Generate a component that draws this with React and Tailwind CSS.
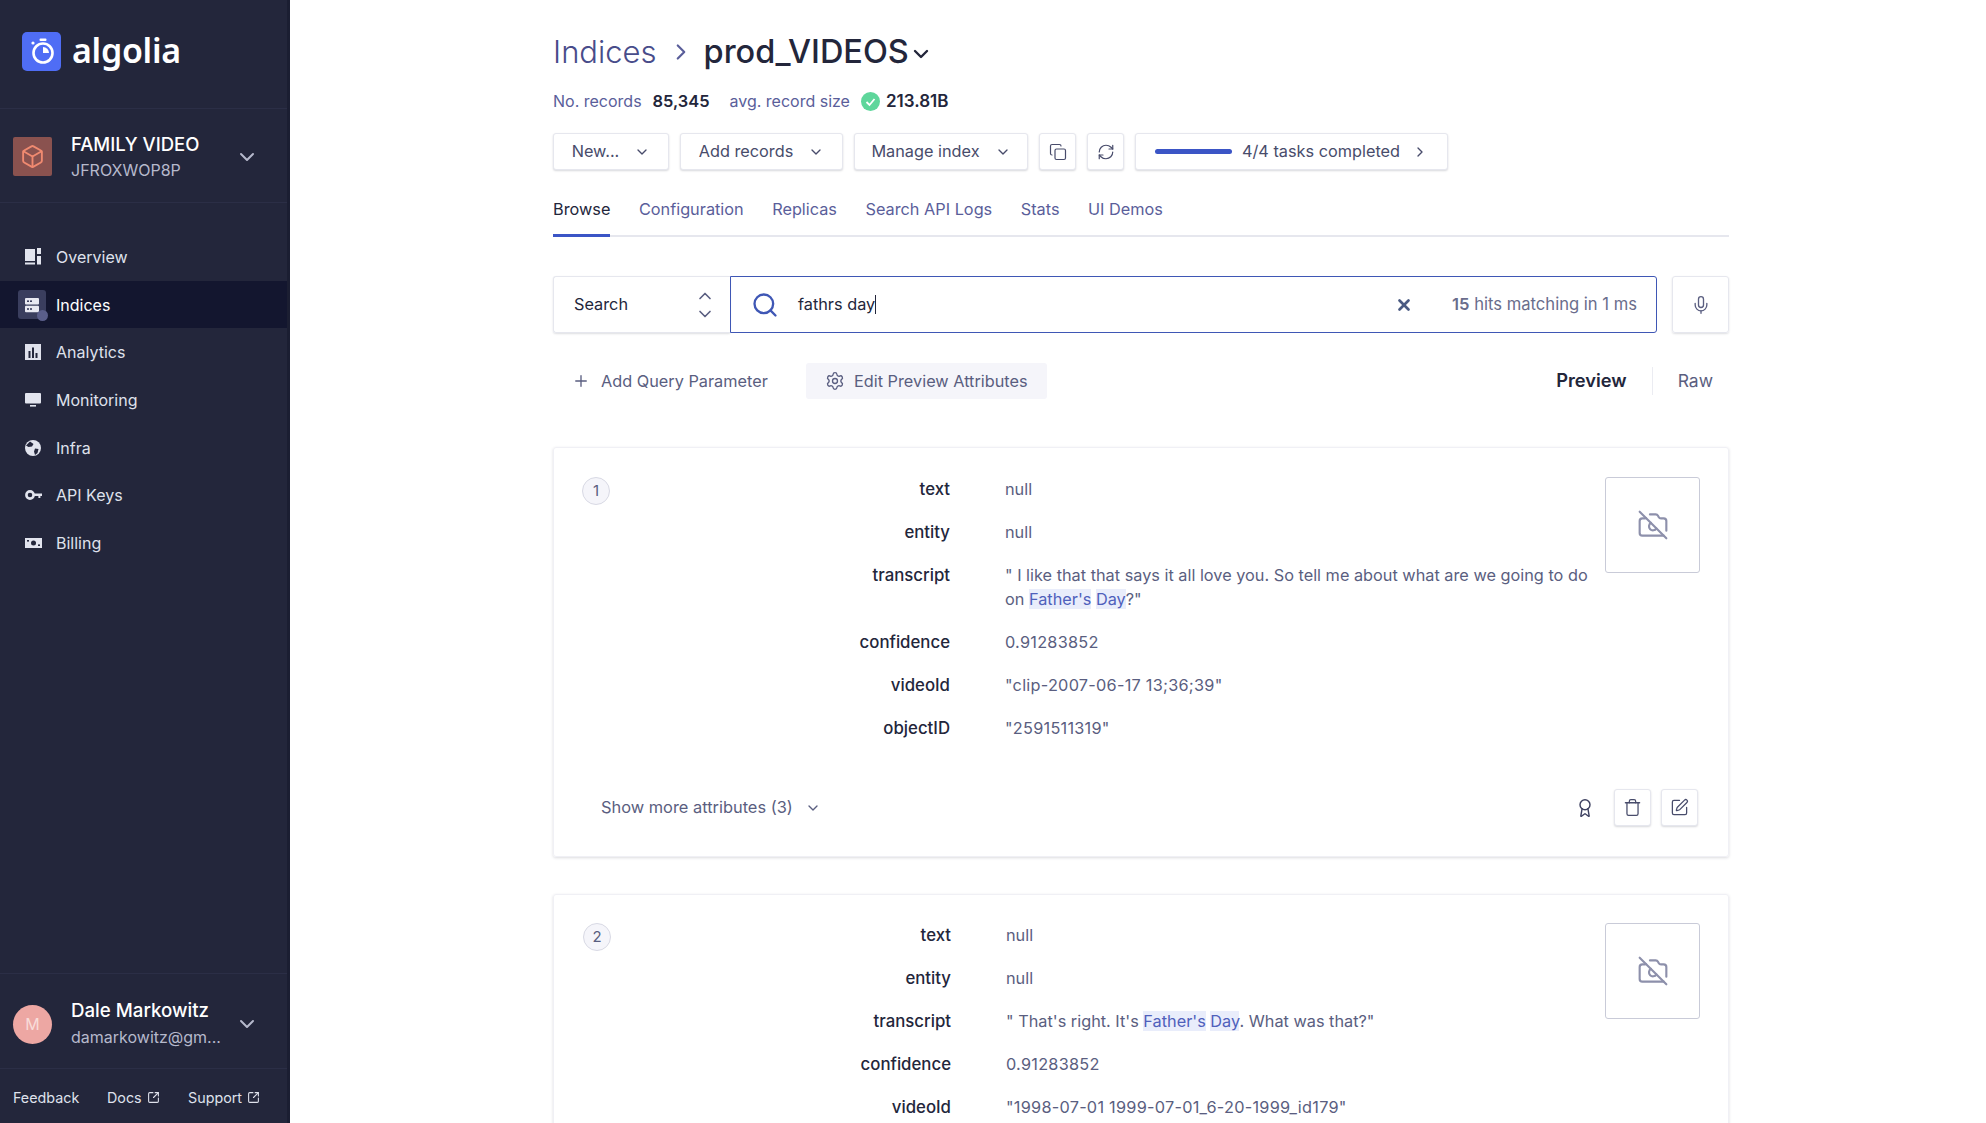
import {
  Award,
  Box,
  CameraOff,
  ChevronDown,
  ChevronRight,
  ChevronUp,
  Copy,
  Mic,
  Plus,
  RefreshCw,
  Search,
  Settings,
  SquareArrowOutUpRight,
  SquarePen,
  Trash,
  X,
} from 'lucide-react';

const OverviewIcon = () => (
  <svg width="18" height="20" viewBox="0 0 18 20" fill="#e2e4ee">
    <rect x="1" y="2" width="10" height="12" />
    <rect x="1" y="15.5" width="10" height="2" />
    <rect x="13" y="1" width="4" height="6" />
    <rect x="13" y="9" width="4" height="8.5" />
  </svg>
);

const IndicesIcon = () => (
  <svg width="16" height="16" viewBox="0 0 16 16">
    <rect x="1" y="1" width="14" height="6.4" rx="1" fill="#e8e9f2" />
    <rect x="1" y="8.8" width="14" height="6.4" rx="1" fill="#e8e9f2" />
    <rect x="3" y="3.4" width="2" height="1.6" fill="#3a3e5e" />
    <rect x="6" y="3.4" width="2" height="1.6" fill="#3a3e5e" />
    <rect x="3" y="11.2" width="2" height="1.6" fill="#3a3e5e" />
    <rect x="6" y="11.2" width="2" height="1.6" fill="#3a3e5e" />
  </svg>
);

const AnalyticsIcon = () => (
  <svg width="16" height="16" viewBox="0 0 16 16">
    <rect width="16" height="16" fill="#dfe1ec" />
    <rect x="3.5" y="7" width="2" height="7" fill="#23263b" />
    <rect x="7" y="3.5" width="2" height="10.5" fill="#23263b" />
    <rect x="10.5" y="9" width="2" height="5" fill="#23263b" />
  </svg>
);

const MonitoringIcon = () => (
  <svg width="16" height="16" viewBox="0 0 16 16" fill="#e2e4ee">
    <rect y="1" width="16" height="10.5" rx="1" />
    <rect x="5" y="13" width="6" height="1.6" />
  </svg>
);

const InfraIcon = () => (
  <svg width="18" height="18" viewBox="0 0 18 18">
    <circle cx="9" cy="9" r="8" fill="#e2e4ee" />
    <path d="M6 2.5 9.5 5 8 7.5 4.5 8 2 6.5M11 9.5l3.5.5-1 4-2.5 2-1-3.5z" fill="#23263b" />
  </svg>
);

const KeyIcon = () => (
  <svg width="17" height="12" viewBox="0 0 17 12">
    <circle cx="5" cy="6" r="3.6" fill="none" stroke="#e2e4ee" strokeWidth="2.6" />
    <path d="M9 4.6h8v2.4h-1.6v2h-2V7H9z" fill="#e2e4ee" />
  </svg>
);

const BillingIcon = () => (
  <svg width="17" height="12" viewBox="0 0 17 12">
    <rect y="1" width="17" height="10" fill="#e2e4ee" />
    <circle cx="8.5" cy="6" r="2.5" fill="#23263b" />
    <rect x="2" y="3" width="2" height="1.6" fill="#23263b" />
    <rect x="13" y="7.4" width="2" height="1.6" fill="#23263b" />
  </svg>
);

const navItems = [
  { label: 'Overview', icon: <OverviewIcon /> },
  { label: 'Indices', icon: <IndicesIcon />, active: true },
  { label: 'Analytics', icon: <AnalyticsIcon /> },
  { label: 'Monitoring', icon: <MonitoringIcon /> },
  { label: 'Infra', icon: <InfraIcon /> },
  { label: 'API Keys', icon: <KeyIcon /> },
  { label: 'Billing', icon: <BillingIcon /> },
];

function Sidebar() {
  return (
    <aside className="w-[290px] h-full shrink-0 flex flex-col bg-[#23263b] border-r-[3px] border-[#1b1e32] text-[#dfe1ec]">
      <div className="h-[109px] shrink-0 flex items-center gap-[11px] pl-[22px] pb-[6px] border-b border-[#2b2e46]">
        <div className="w-[39px] h-[39px] rounded-[5px] bg-[#4f6df5] flex items-center justify-center">
          <svg width="26" height="28" viewBox="0 0 26 28" fill="none">
            <circle cx="14" cy="16" r="9.5" stroke="#fff" strokeWidth="2.6" />
            <path d="M14 16V10a6 6 0 0 1 6 6z" fill="#fff" />
            <rect x="10.5" y="1.5" width="7" height="2.4" rx="1" fill="#fff" />
            <circle cx="4" cy="6" r="1.6" fill="#fff" />
          </svg>
        </div>
        <span className="font-['Noto_Sans'] font-semibold text-[34px] leading-none text-white tracking-[-0.3px] pb-[3px]">algolia</span>
      </div>

      <div className="h-[94px] shrink-0 flex items-center pl-[13px] pr-[28px] pt-[2px] border-b border-[#2b2e46]">
        <div className="w-[39px] h-[39px] rounded-[2px] bg-[#8a524f] flex items-center justify-center">
          <Box size={25} strokeWidth={1.8} color="#f08a70" />
        </div>
        <div className="ml-[19px] flex-1">
          <div className="text-[18.5px] leading-[26px] font-medium text-white">FAMILY VIDEO</div>
          <div className="text-[16px] leading-[26px] text-[#b6b9cc]">JFROXWOP8P</div>
        </div>
        <ChevronDown size={24} strokeWidth={2} color="#b6b9cc" />
      </div>

      <nav className="mt-[30px] flex flex-col">
        {navItems.map((item) => (
          <div key={item.label} className={`h-[47.7px] flex items-center text-[16px] ${item.active ? 'bg-[#13162f] text-white' : ''}`}>
            <div className="w-[56px] flex justify-center pl-[10px]">
              {item.active ? (
                <div className="relative w-[28px] h-[29px] rounded-[3px] bg-[#3a3e5e] flex items-center justify-center -ml-[2px]">
                  {item.icon}
                  <span className="absolute -right-[2px] -bottom-[2px] w-[11px] h-[11px] rounded-full bg-[#5a5e8a]" />
                </div>
              ) : (
                item.icon
              )}
            </div>
            <span>{item.label}</span>
          </div>
        ))}
      </nav>

      <div className="mt-auto border-t border-[#2b2e46] h-[95px] flex items-center pl-[13px] pr-[28px] pt-[6px]">
        <div className="w-[39px] h-[39px] rounded-full bg-[#eda7a3] flex items-center justify-center text-[16px] text-[#f8dcd9]">M</div>
        <div className="ml-[19px] flex-1">
          <div className="text-[18.7px] leading-[26px] font-medium text-white">Dale Markowitz</div>
          <div className="text-[16px] leading-[26px] text-[#b6b9cc]">damarkowitz@gm...</div>
        </div>
        <ChevronDown size={24} strokeWidth={2} color="#b6b9cc" />
      </div>
      <div className="h-[55px] pt-[3px] border-t border-[#2b2e46] flex items-center pl-[13px] text-[14.3px] text-[#dfe1ec]">
        <span className="w-[94px]">Feedback</span>
        <span className="w-[81px] flex items-center gap-[5px]">Docs <SquareArrowOutUpRight size={13} /></span>
        <span className="flex items-center gap-[5px]">Support <SquareArrowOutUpRight size={13} /></span>
      </div>
    </aside>
  );
}

function Btn({ children, className = '' }) {
  return (
    <div className={`h-[37px] bg-white rounded-[3px] border border-[#e6e7ee] shadow-[0_1px_2px_rgba(35,38,59,0.18)] flex items-center justify-center text-[16.3px] text-[#484c6b] ${className}`}>
      {children}
    </div>
  );
}

function Row({ label, children, pad, num }) {
  return (
    <div className="flex pb-[19px] leading-[24px]">
      <div className={`${pad ? 'w-[397px]' : 'w-[396px]'} text-[16.8px] text-right font-medium text-[#23263b] shrink-0`}>{label}</div>
      <div className={`ml-[55px] text-[16.3px] text-[#5a5e80] ${num ? 'tracking-[0.25px]' : ''}`}>{children}</div>
    </div>
  );
}

function Hl({ children }) {
  return <span className="bg-[#e9edfb] text-[#4f60bb]">{children}</span>;
}

function ImageBox() {
  return (
    <div className="w-[95px] h-[96px] shrink-0 rounded-[3px] border border-[#c9cbd8] flex items-center justify-center">
      <CameraOff size={32} strokeWidth={1.6} color="#8d90ab" />
    </div>
  );
}

function Badge({ n }) {
  return (
    <div className="w-[28px] h-[28px] shrink-0 rounded-full bg-[#f5f5fa] border border-[#d8d9e4] flex items-center justify-center text-[15px] text-[#5a5e80]">
      {n}
    </div>
  );
}

function App() {
  return (
    <div className="w-[1986px] h-[1123px] overflow-hidden flex bg-white font-['Inter',sans-serif]">
      <Sidebar />
      <main className="flex-1 min-w-0 pl-[263px] pr-[257px] overflow-hidden">
        <div className="h-[104px] pt-[29px]">
          <div className="flex items-center h-[46px]">
            <span className="text-[31px] font-light text-[#484c8a]">Indices</span>
            <ChevronRight size={26} strokeWidth={2} color="#5a5e9a" className="ml-[11px]" />
            <span className="ml-[10px] text-[32.5px] font-medium text-[#23263b]">prod_VIDEOS</span>
            <ChevronDown size={24} strokeWidth={2.4} color="#23263b" className="mt-[3px]" />
          </div>
          <div className="mt-[14px] flex items-center h-[24px] text-[16px] text-[#5a5e9a]">
            <span>No. records</span>
            <span className="ml-[11px] text-[16.4px] font-semibold text-[#23263b]">85,345</span>
            <span className="ml-[20px]">avg. record size</span>
            <svg className="ml-[11px]" width="19" height="19" viewBox="0 0 19 19">
              <circle cx="9.5" cy="9.5" r="9.5" fill="#5ed69b" />
              <path d="m5.5 10 3 3 5-6" fill="none" stroke="#fff" strokeWidth="1.8" />
            </svg>
            <span className="ml-[6px] pt-[1px] text-[17px] font-semibold text-[#23263b]">213.81B</span>
          </div>
        </div>

        <div className="mt-[29px] flex gap-[11px]">
          <Btn className="w-[116px] gap-[15px]">New... <ChevronDown size={16} /></Btn>
          <Btn className="w-[163px] gap-[15px]">Add records <ChevronDown size={16} /></Btn>
          <Btn className="w-[174px] gap-[15px]">Manage index <ChevronDown size={16} /></Btn>
          <Btn className="w-[37px]"><Copy size={18} strokeWidth={1.6} /></Btn>
          <Btn className="w-[37px]"><RefreshCw size={18} strokeWidth={1.6} /></Btn>
          <Btn className="w-[313px]">
            <span className="w-[77px] h-[5px] rounded-full bg-[#3b55c6]" />
            <span className="ml-[10px]">4/4 tasks completed</span>
            <ChevronRight size={16} className="ml-[12px]" />
          </Btn>
        </div>

        <div className="mt-[27px] h-[40px] flex gap-[28.5px] border-b-2 border-[#e6e7ee] text-[16.3px] text-[#5a5e9a]">
          <div className="h-[40px] border-b-[3px] border-[#3b55c6] text-[#23263b]">Browse</div>
          <div>Configuration</div>
          <div>Replicas</div>
          <div>Search API Logs</div>
          <div>Stats</div>
          <div>UI Demos</div>
        </div>

        <div className="mt-[39px] flex h-[57px]">
          <div className="w-[177px] rounded-l-[3px] border border-[#e6e7ee] border-r-0 shadow-[0_1px_2px_rgba(35,38,59,0.15)] flex items-center pl-[20px] pr-[15px] justify-between text-[16.3px] text-[#23263b]">
            Search
            <div className="flex flex-col -space-y-[2px] text-[#5a5e80]">
              <ChevronUp size={20} />
              <ChevronDown size={20} />
            </div>
          </div>
          <div className="w-[927px] rounded-r-[3px] border border-[#3f57b5] flex items-center pl-[20px] pr-[19px] text-[16.3px]">
            <Search size={28} strokeWidth={2} color="#3f57b5" />
            <span className="ml-[19px] text-[#23263b]">fathrs day</span>
            <span className="w-px h-[19px] bg-[#23263b]" />
            <X size={18} strokeWidth={3.6} color="#4a5a82" className="ml-auto" />
            <span className="ml-[39px] text-[16.6px] text-[#6a6d8c]"><span className="font-semibold">15</span> hits matching in 1 ms</span>
          </div>
          <div className="ml-[15px] w-[57px] rounded-[3px] border border-[#e6e7ee] shadow-[0_1px_2px_rgba(35,38,59,0.15)] flex items-center justify-center">
            <Mic size={20} strokeWidth={1.6} color="#5a5e80" />
          </div>
        </div>

        <div className="mt-[30px] flex items-center h-[36px] text-[16.3px] text-[#5a5e80]">
          <Plus size={18} strokeWidth={1.8} className="ml-[19px]" />
          <span className="ml-[11px]">Add Query Parameter</span>
          <div className="ml-[38px] h-[36px] w-[241px] rounded-[3px] bg-[#f5f5fa] flex items-center justify-center gap-[9px]">
            <Settings size={20} strokeWidth={1.6} /> Edit Preview Attributes
          </div>
          <span className="ml-auto text-[18.3px] font-semibold text-[#23263b]">Preview</span>
          <span className="ml-[25px] h-[28px] w-px bg-[#ebecf2]" />
          <span className="ml-[25px] mr-[16px] text-[17.5px] text-[#5a5e80]">Raw</span>
        </div>

        <section className="mt-[48px] h-[410px] rounded-[3px] border border-[#f0f0f5] shadow-[0_1px_3px_rgba(35,38,59,0.16)] pt-[29px] pr-[28px] flex flex-col">
          <div className="flex">
            <div className="relative flex-1 min-w-0">
              <div className="absolute left-[28px] top-[0px]"><Badge n={1} /></div>
              <Row label="text">null</Row>
              <Row label="entity">null</Row>
              <Row label="transcript">
                " I like that that says it all love you. So tell me about what are we going to do
                <br />
                on <Hl>Father's</Hl> <Hl>Day</Hl>?"
              </Row>
              <Row num label="confidence">0.91283852</Row>
              <Row num label="videoId">"clip-2007-06-17 13;36;39"</Row>
              <Row num label="objectID">"2591511319"</Row>
            </div>
            <ImageBox />
          </div>
          <div className="mt-[30px] pl-[47px] pr-[2px] flex items-center h-[37px] text-[16.4px] text-[#5a5e80]">
            Show more attributes (3)
            <ChevronDown size={16} className="ml-[12px]" />
            <Award size={20} strokeWidth={1.7} color="#3d4060" className="ml-auto mr-[19px]" />
            <Btn className="!w-[37px] mr-[10px]"><Trash size={19} strokeWidth={1.6} /></Btn>
            <Btn className="!w-[37px]"><SquarePen size={19} strokeWidth={1.6} /></Btn>
          </div>
        </section>

        <section className="mt-[37px] rounded-[3px] border border-[#f0f0f5] shadow-[0_1px_3px_rgba(35,38,59,0.16)] pt-[28px] pr-[28px]">
          <div className="flex">
            <div className="relative flex-1 min-w-0">
              <div className="absolute left-[29px] top-[0px]"><Badge n={2} /></div>
              <Row pad label="text">null</Row>
              <Row pad label="entity">null</Row>
              <Row pad label="transcript">" That's right. It's <Hl>Father's</Hl> <Hl>Day</Hl>. What was that?"</Row>
              <Row pad num label="confidence">0.91283852</Row>
              <Row pad num label="videoId">"1998-07-01 1999-07-01_6-20-1999_id179"</Row>
            </div>
            <ImageBox />
          </div>
        </section>
      </main>
    </div>
  );
}

export default App;
